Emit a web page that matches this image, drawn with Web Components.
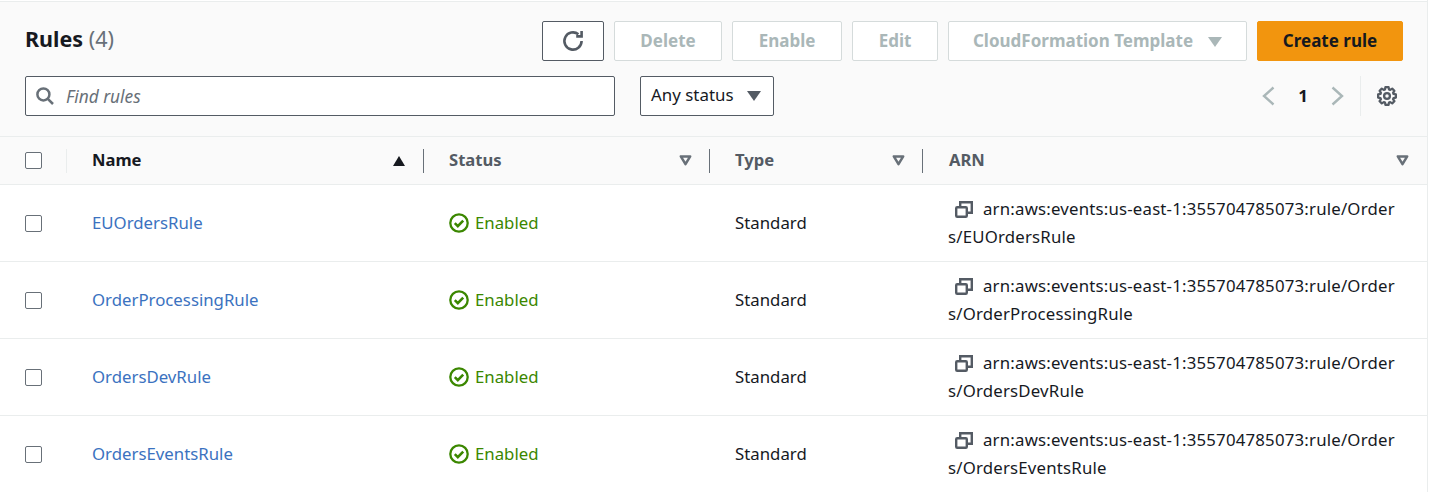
<!DOCTYPE html>
<html lang="en">
<head>
<meta charset="utf-8">
<title>Rules</title>
<style>
  html, body { margin: 0; background: #fff; }
  body { font-family: "Noto Sans", "Open Sans", sans-serif; font-size: 16.8px; color: #16191f; height: 492px; overflow: hidden; }
</style>
</head>
<body>
<rules-panel></rules-panel>

<script>
// Cog outline: 8 teeth, worked out here so the path stays symmetrical.
function cogPath() {
  const pts = [];
  for (let i = 0; i < 8; i++) {
    const a = i * Math.PI / 4;
    [[-0.3, 6.9], [-0.17, 9], [0.17, 9], [0.3, 6.9]].forEach(([da, r]) => {
      pts.push((10 + r * Math.sin(a + da)).toFixed(2) + ' ' + (10 - r * Math.cos(a + da)).toFixed(2));
    });
  }
  return 'M' + pts.join('L') + 'z';
}

const ICONS = {
  refresh: '<svg width="22" height="22" viewBox="0 0 22 22" fill="none" stroke="#545b64" stroke-width="2.6"><path d="M19.6 11a8.6 8.6 0 1 1-3.2-6.7"/><path d="M19.6 1v5.4h-5.4"/></svg>',
  search: '<svg width="18" height="18" viewBox="0 0 18 18" fill="none" stroke="#687078" stroke-width="2.5"><circle cx="7.4" cy="7.4" r="6"/><path d="M11.8 11.8l5.2 5.2"/></svg>',
  prev: '<svg width="13" height="20" viewBox="0 0 13 20" fill="none" stroke="#aab7b8" stroke-width="2.4"><path d="M11.5 1.5L2 10l9.5 8.5"/></svg>',
  next: '<svg width="13" height="20" viewBox="0 0 13 20" fill="none" stroke="#aab7b8" stroke-width="2.4"><path d="M1.5 1.5L11 10l-9.5 8.5"/></svg>',
  gear: `<svg width="20" height="20" viewBox="0 0 20 20" fill="none" stroke="#545b64" stroke-width="2.3" stroke-linejoin="round"><circle cx="10" cy="10" r="2.9"/><path d="${cogPath()}"/></svg>`,
  copy: '<svg width="18" height="17" viewBox="0 0 18 17" fill="none" stroke="#545b64" stroke-width="2.4"><rect x="1.2" y="6.2" width="10.6" height="9.6" rx="1"/><path d="M5.2 6V1.2h11.6v10.6H12"/></svg>',
  ok: '<svg width="20" height="20" viewBox="0 0 20 20" fill="none" stroke="#3b8700" stroke-width="2.3"><circle cx="10" cy="10" r="8.7"/><path d="M5.8 10.2l3 3 5.4-5.6" stroke-width="2.6"/></svg>'
};

class AwsButton extends HTMLElement {
  connectedCallback() {
    const variant = this.getAttribute('variant') || 'disabled';
    const width = this.getAttribute('width');
    const caret = this.hasAttribute('caret') ? '<i></i>' : '';
    this.attachShadow({ mode: 'open' }).innerHTML = `
      <style>
        :host { display: block; flex: none; width: ${width}px; }
        button {
          box-sizing: border-box; width: 100%; height: 40px; padding: 0;
          display: flex; align-items: center; justify-content: center; gap: 15px;
          font: 700 17px/22px "Noto Sans", "Open Sans", sans-serif;
          border-radius: 2px; border: 1px solid #d5dbdb; background: #fff; color: #aab7b8;
        }
        button.normal { border-color: #545b64; }
        button.primary { border-color: #f2950e; background: #f2950e; color: #16191f; }
        i { width: 0; height: 0; margin-top: 2px; border: 7px solid transparent; border-top: 10px solid #aab7b8; border-bottom: 0; }
        button span { display: flex; margin-top: -1px; }
        button.normal span { margin-top: 0; }
      </style>
      <button class="${variant}"><span><slot></slot></span>${caret}</button>`;
  }
}
customElements.define('aws-button', AwsButton);

class StatusSelect extends HTMLElement {
  connectedCallback() {
    this.attachShadow({ mode: 'open' }).innerHTML = `
      <style>
        :host {
          box-sizing: border-box; flex: none; width: 134px; height: 40px;
          display: flex; align-items: center; gap: 13px; padding: 0 10px;
          background: #fff; border: 1px solid #545b64; border-radius: 2px; font-size: 16.9px;
        }
        span { margin-top: -4px; }
        i { width: 0; height: 0; border: 7px solid transparent; border-top: 10px solid #545b64; border-bottom: 0; }
      </style>
      <span><slot></slot></span><i></i>`;
  }
}
customElements.define('status-select', StatusSelect);

class FindInput extends HTMLElement {
  connectedCallback() {
    const hint = this.getAttribute('placeholder');
    this.attachShadow({ mode: 'open' }).innerHTML = `
      <style>
        :host {
          box-sizing: border-box; flex: none; width: 590px; height: 40px;
          display: flex; align-items: center; gap: 12px; padding: 0 10px;
          background: #fff; border: 1px solid #545b64; border-radius: 2px;
        }
        svg { display: block; }
        span { font-style: italic; color: #687078; font-size: 17.3px; }
      </style>
      ${ICONS.search}<span>${hint}</span>`;
  }
}
customElements.define('find-input', FindInput);

class PagerControls extends HTMLElement {
  connectedCallback() {
    this.attachShadow({ mode: 'open' }).innerHTML = `
      <style>
        :host { margin-left: auto; margin-right: 6px; display: flex; align-items: center; height: 40px; }
        svg { display: block; }
        b { width: 56px; text-align: center; font-size: 16.8px; font-weight: 700; color: #16191f; margin-top: -2px; }
        .gear { margin-left: 16px; height: 40px; border-left: 1px solid #eaeded; padding-left: 16px; display: flex; align-items: center; }
      </style>
      ${ICONS.prev}<b>1</b>${ICONS.next}<div class="gear">${ICONS.gear}</div>`;
  }
}
customElements.define('pager-controls', PagerControls);

class RuleCheckbox extends HTMLElement {
  connectedCallback() {
    this.attachShadow({ mode: 'open' }).innerHTML = `
      <style>
        :host { display: block; box-sizing: border-box; width: 17px; height: 17px; background: #fff; border: 1px solid #687078; border-radius: 2px; }
      </style>`;
  }
}
customElements.define('rule-checkbox', RuleCheckbox);

const COLUMNS = 'grid-template-columns: 67px 357px 286px 213px 1fr;';

class TableHead extends HTMLElement {
  connectedCallback() {
    const cols = [['Name', 'sorted'], ['Status', ''], ['Type', ''], ['ARN', 'last']];
    this.attachShadow({ mode: 'open' }).innerHTML = `
      <style>
        :host {
          display: grid; ${COLUMNS} height: 49px; box-sizing: border-box;
          background: #fafafa; border-top: 1px solid #eaeded; border-bottom: 1px solid #eaeded;
        }
        .cell { position: relative; display: flex; align-items: center; justify-content: space-between; padding: 0 18px 0 25px; font-weight: 700; font-size: 16.6px; color: #545b64; }
        .cell::before { content: ""; position: absolute; left: -1px; top: 12px; bottom: 11px; width: 1px; background: #687078; }
        .cell.first::before { background: #eaeded; }
        .cell.check::before { display: none; }
        .cell > span:first-child { margin-top: -2px; }
        .sorted { color: #16191f; padding-right: 19px; }
        .last { padding-left: 26px; }
        .up { width: 0; height: 0; border: 6.5px solid transparent; border-bottom: 10px solid #16191f; border-top: 0; }
        svg { display: block; }
      </style>
      <div class="cell check"><rule-checkbox></rule-checkbox></div>
      ${cols.map(([name, cls], i) => `
        <div class="cell ${cls} ${i === 0 ? 'first' : ''}">
          <span>${name}</span>
          ${cls === 'sorted' ? '<span class="up"></span>' : '<svg width="13" height="11" viewBox="0 0 13 11" fill="none" stroke="#687078" stroke-width="2.5"><path d="M1.8 1.4h9.4L6.5 9.2z" stroke-linejoin="round"/></svg>'}
        </div>`).join('')}`;
  }
}
customElements.define('table-head', TableHead);

class RuleRow extends HTMLElement {
  connectedCallback() {
    const name = this.getAttribute('name');
    this.attachShadow({ mode: 'open' }).innerHTML = `
      <style>
        :host {
          display: grid; ${COLUMNS} height: 77px; box-sizing: border-box; align-items: center;
          border-bottom: 1px solid #eaeded; font-size: 16.8px; color: #16191f;
        }
        .cell { padding-left: 25px; }
        .text { margin-top: -2px; }
        a { color: #3b72c0; text-decoration: none; }
        .status { display: flex; align-items: center; gap: 6px; color: #3b8700; }
        .status span { margin-top: -2px; }
        svg { display: block; }
        .arn { line-height: 28px; padding-right: 28px; word-break: break-all; letter-spacing: 0.2px; }
        .arn svg { display: inline-block; vertical-align: -3px; margin: 0 10px 0 7px; }
      </style>
      <div class="cell"><rule-checkbox></rule-checkbox></div>
      <div class="cell text"><a href="#">${name}</a></div>
      <div class="cell status">${ICONS.ok}<span>Enabled</span></div>
      <div class="cell text">Standard</div>
      <div class="cell arn">${ICONS.copy}arn:aws:events:us-east-1:355704785073:rule/Orders/${name}</div>`;
  }
}
customElements.define('rule-row', RuleRow);

class RulesPanel extends HTMLElement {
  connectedCallback() {
    this.attachShadow({ mode: 'open' }).innerHTML = `
      <style>
        :host { display: block; box-sizing: border-box; width: 1428px; height: 492px; padding-top: 1px; border-right: 1px solid #eaeded; overflow: hidden; }
        header { background: #fafafa; border-top: 1px solid #eaeded; padding: 19px 24px 20px 25px; display: flex; flex-direction: column; gap: 15px; }
        .row { display: flex; align-items: center; height: 40px; }
        h2 { margin: -4px auto 0 0; font-size: 21.5px; line-height: 28px; font-weight: 700; color: #16191f; }
        h2 span { font-weight: 400; color: #687078; }
        .actions { display: flex; gap: 10px; }
        .second status-select { margin-left: 25px; }
      </style>
      <header>
        <div class="row">
          <h2>Rules <span>(4)</span></h2>
          <div class="actions">
            <aws-button variant="normal" width="62">${ICONS.refresh}</aws-button>
            <aws-button width="108">Delete</aws-button>
            <aws-button width="110">Enable</aws-button>
            <aws-button width="86">Edit</aws-button>
            <aws-button width="299" caret>CloudFormation Template</aws-button>
            <aws-button variant="primary" width="146">Create rule</aws-button>
          </div>
        </div>
        <div class="row second">
          <find-input placeholder="Find rules"></find-input>
          <status-select>Any status</status-select>
          <pager-controls></pager-controls>
        </div>
      </header>
      <table-head></table-head>
      <rule-row name="EUOrdersRule"></rule-row>
      <rule-row name="OrderProcessingRule"></rule-row>
      <rule-row name="OrdersDevRule"></rule-row>
      <rule-row name="OrdersEventsRule"></rule-row>`;
  }
}
customElements.define('rules-panel', RulesPanel);
</script>
</body>
</html>
